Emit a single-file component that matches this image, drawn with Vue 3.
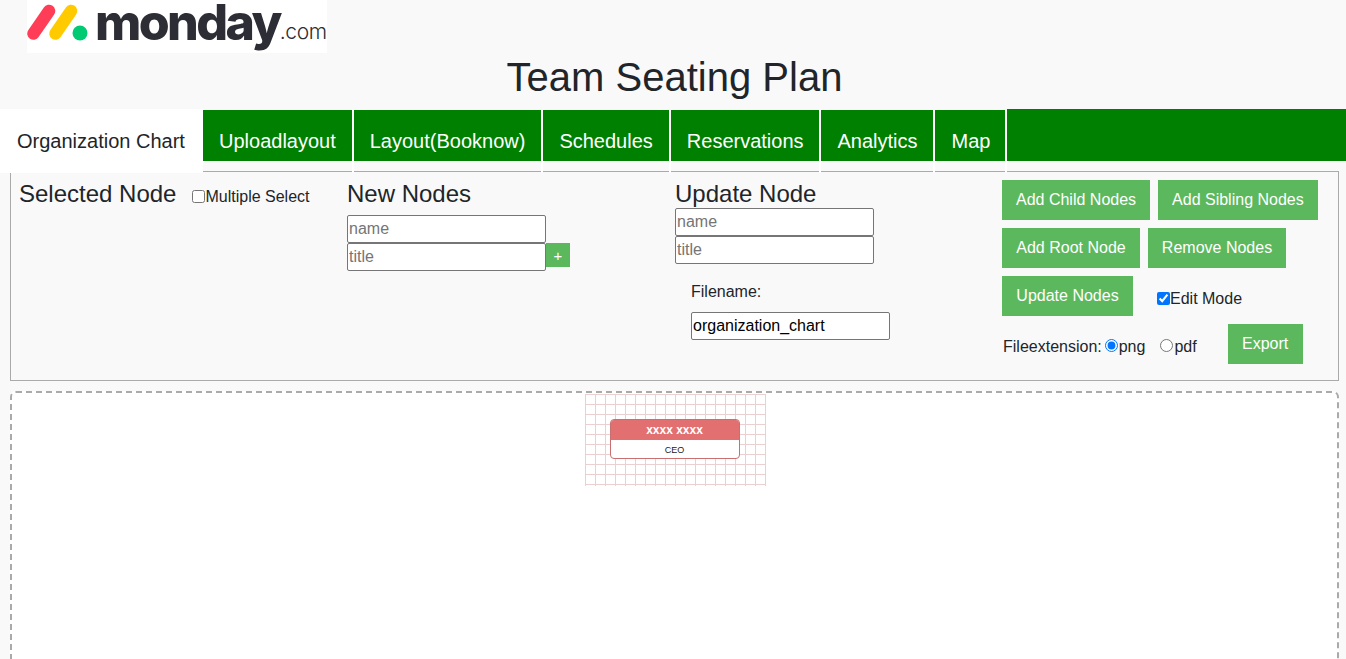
<template>
  <div class="page">
    <div class="logo">
      <svg class="mark" width="68" height="53" viewBox="0 0 68 53">
        <line x1="6.5" y1="33.5" x2="22" y2="11" stroke="#ff3d57" stroke-width="12.5" stroke-linecap="round" />
        <line x1="28.5" y1="33.5" x2="44" y2="11" stroke="#ffcb00" stroke-width="12.5" stroke-linecap="round" />
        <circle cx="53" cy="33" r="7.5" fill="#00ca72" />
      </svg>
      <span class="word">monday</span><span class="com">.com</span>
    </div>
    <h1 class="title">Team Seating Plan</h1>
    <nav class="tabs">
      <a v-for="(t, i) in tabs" :key="t" class="tab" :class="{ active: i === 0 }"><span class="tab-label">{{ t }}</span></a>
      <div class="tab-fill"></div>
    </nav>
    <section class="panel">
      <div class="col">
        <div class="selected">
          <h3>Selected Node</h3>
          <label class="multi"><input type="checkbox" /><span class="opt">Multiple Select</span></label>
        </div>
      </div>
      <div class="col">
        <h3 class="new-head">New Nodes</h3>
        <div class="inputs"><input class="field" placeholder="name" /></div>
        <div class="with-plus">
          <input class="field" placeholder="title" />
          <button class="plus">+</button>
        </div>
      </div>
      <div class="col">
        <h3>Update Node</h3>
        <div class="inputs">
          <input class="field" placeholder="name" />
          <input class="field" placeholder="title" />
        </div>
        <div class="file">
          <label>Filename:</label>
          <input class="field" value="organization_chart" />
        </div>
      </div>
      <div class="col actions">
        <div class="row">
          <button class="btn">Add Child Nodes</button>
          <button class="btn">Add Sibling Nodes</button>
        </div>
        <div class="row">
          <button class="btn root">Add Root Node</button>
          <button class="btn remove">Remove Nodes</button>
        </div>
        <div class="row">
          <button class="btn update">Update Nodes</button>
          <label class="edit"><input type="checkbox" checked /><span class="opt">Edit Mode</span></label>
        </div>
        <div class="row export-row">
          <span class="ext">Fileextension:</span>
          <label class="radio"><input type="radio" name="ext" checked /><span class="radio-text">png</span></label>
          <label class="radio pdf"><input type="radio" name="ext" /><span class="radio-text">pdf</span></label>
          <button class="btn export">Export</button>
        </div>
      </div>
    </section>
    <section class="chart">
      <div class="canvas">
        <div class="node">
          <div class="node-name">xxxx xxxx</div>
          <div class="node-title">CEO</div>
        </div>
      </div>
    </section>
  </div>
</template>

<script setup>
const tabs = ['Organization Chart', 'Uploadlayout', 'Layout(Booknow)', 'Schedules', 'Reservations', 'Analytics', 'Map']
</script>

<style>
html, body { margin: 0; overflow: hidden; background: #f9f9f9; }
</style>

<style scoped>
.page {
  height: 659px;
  overflow: hidden;
  background: #f9f9f9;
  color: #212529;
  font-family: "Liberation Sans", Arial, sans-serif;
  font-size: 16px;
}
.logo {
  margin-left: 27px;
  width: 300px;
  height: 53px;
  background: #fff;
  display: flex;
  font-family: Inter, sans-serif;
}
.mark { flex: none; }
.word {
  font-size: 50px;
  line-height: 44px;
  height: 44px;
  font-weight: 800;
  color: #2c2d35;
  letter-spacing: -2.6px;
}
.com {
  font-size: 21px;
  font-weight: 300;
  color: #2c2d35;
  line-height: 24px;
  height: 24px;
  margin-top: 20px;
  letter-spacing: -0.4px;
}
.title {
  margin: 0;
  height: 56px;
  padding: 0 0 1px 3px;
  box-sizing: border-box;
  text-align: center;
  font-size: 40px;
  font-weight: 400;
  line-height: 48px;
}
.tabs {
  display: flex;
  height: 52px;
  position: relative;
  z-index: 1;
}
.tab {
  height: 63px;
  margin-top: 1px;
  border-right: 2px solid #fff;
  color: #fff;
  font-size: 20px;
  box-sizing: border-box;
}
.tab-label {
  display: block;
  height: 51px;
  padding: 0 16px;
  line-height: 62px;
  background: #008000;
  overflow: hidden;
  white-space: nowrap;
}
.tab:nth-child(5) .tab-label { padding-right: 15px; }
.tab:nth-child(6) .tab-label { padding-left: 17px; padding-right: 15px; }
.tab:nth-child(7) .tab-label { padding-left: 17px; padding-right: 15px; }
.tab.active {
  background: #fff;
  color: #212529;
  border-right: 0;
  width: 203px;
  height: 64px;
  margin-top: 0;
}
.tab.active .tab-label {
  background: #fff;
  padding-left: 17px;
  margin-top: 1px;
}
.tab-fill {
  flex: 1;
  height: 52px;
  background: #008000;
}
.panel {
  margin: 10px 7px 0 10px;
  height: 210px;
  box-sizing: border-box;
  border: 1px solid #aaa;
  padding: 8px 0 0 8px;
  display: grid;
  grid-template-columns: 328px 328px 327px 1fr;
  background: #f9f9f9;
}
h3 {
  margin: 0;
  font-size: 24px;
  font-weight: 400;
  line-height: 28px;
}
.selected { display: flex; }
.multi { margin: 6px 0 0 16px; display: flex; align-items: center; height: 20px; }
.opt { padding-top: 2px; }
input[type="checkbox"], input[type="radio"] { margin: 0; width: 13px; height: 13px; flex: none; }
.new-head { margin-bottom: 7px; }
.inputs { display: flex; flex-direction: column; }
.with-plus { display: flex; align-items: flex-start; }
.field {
  width: 199px;
  height: 28px;
  box-sizing: border-box;
  border: 1px solid #767676;
  border-radius: 2px;
  padding: 1px;
  background: #fff;
  font: 16px "Liberation Sans", Arial, sans-serif;
  color: #000;
}
.field::placeholder { color: #757575; }
.plus {
  width: 24px;
  height: 24px;
  border: 0;
  padding: 0;
  background: #5cb85c;
  color: #fff;
  font: 15px "Liberation Sans", Arial, sans-serif;
}
.file { margin: 19px 0 0 16px; }
.file label { display: block; height: 19px; margin-bottom: 10px; }
.row { display: flex; margin-bottom: 8px; height: 40px; }
.btn {
  height: 40px;
  border: 0;
  padding: 0 14px;
  margin-right: 8px;
  background: #5cb85c;
  color: #fff;
  font: 16px "Liberation Sans", Arial, sans-serif;
}
.root, .remove { width: 138px; padding: 0; }
.update { width: 131px; padding: 0; }
.edit { display: flex; align-items: center; margin: 4px 0 0 16px; height: 36px; }
.export-row { align-items: center; white-space: nowrap; }
.ext { margin: 6px 3px 0 1px; }
.radio { display: flex; align-items: center; margin-top: 2px; }
.radio-text { padding: 4px 0 0 1px; }
.pdf { margin-left: 15px; }
.export { margin: 0 0 0 31px; width: 75px; padding: 0; }
.chart {
  margin: 10px 7px 0 10px;
  height: 400px;
  box-sizing: border-box;
  border: 2px dashed #aaa;
  border-radius: 6px;
  background: #fff;
  display: flex;
  justify-content: center;
}
.canvas {
  width: 181px;
  height: 92px;
  margin: 1px 0 0 2px;
  padding: 25px 2px 0 0;
  box-sizing: border-box;
  background-image:
    repeating-linear-gradient(to right, #eccfd0 0 1px, transparent 1px 10px),
    repeating-linear-gradient(to bottom, #eccfd0 0 1px, transparent 1px 10px);
  display: flex;
  justify-content: center;
  align-items: flex-start;
}
.node {
  width: 130px;
  height: 40px;
  box-sizing: border-box;
  border: 1px solid #c96f6f;
  border-radius: 4px;
  overflow: hidden;
  background: #fff;
  text-align: center;
}
.node-name {
  height: 20px;
  background: #e27070;
  color: #fff;
  font-size: 12px;
  font-weight: 700;
  line-height: 20px;
}
.node-title {
  height: 18px;
  color: #222;
  font-size: 9px;
  line-height: 20px;
}
</style>
